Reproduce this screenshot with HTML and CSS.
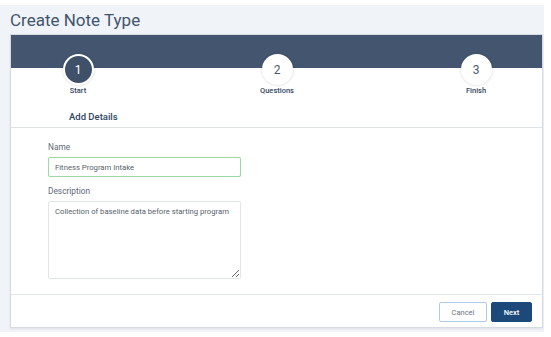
FILE: index.html
```html
<!DOCTYPE html>
<html>

<head>
    <title>Create Note Type</title>
    <link rel="stylesheet" href="styles.css">
</head>

<body>
    <div class="page">
        <h1 class="page-title">Create Note Type</h1>

        <div class="card">
            <!-- Wizard steps -->
            <div class="stepper">
                <div class="stepper-band"></div>
                <div class="steps">
                    <div class="step active">
                        <span class="step-circle">1</span>
                        <span class="step-label">Start</span>
                    </div>
                    <div class="step">
                        <span class="step-circle">2</span>
                        <span class="step-label">Questions</span>
                    </div>
                    <div class="step">
                        <span class="step-circle">3</span>
                        <span class="step-label">Finish</span>
                    </div>
                </div>
            </div>

            <div class="section-head">Add Details</div>

            <!-- Note type form -->
            <form class="note-form">
                <label for="note-name">Name</label>
                <input type="text" id="note-name" class="valid" value="Fitness Program Intake" />

                <label for="note-desc">Description</label>
                <textarea id="note-desc">Collection of baseline data before starting program</textarea>
            </form>

            <div class="card-footer">
                <button type="button" class="btn btn-outline">Cancel</button>
                <button type="button" class="btn btn-primary">Next</button>
            </div>
        </div>
    </div>
</body>

</html>
```

FILE: styles.css
```css
/* Page */
body {
    margin: 0;
    font-family: Roboto, "Noto Sans", sans-serif;
    background-color: #fff;
}
.page {
    margin-top: 5px;
    width: 534px;
    height: 327px;
    padding: 0 0 0 10px;
    background-color: #f0f3f7;
    overflow: hidden;
}
.page-title {
    margin: 5px 0 4px;
    font-size: 17px;
    line-height: 20px;
    font-weight: 400;
    color: #42546c;
}

/* Card */
.card {
    width: 531px;
    height: 292px;
    background-color: #fff;
    border: 1px solid #d6dbe2;
    box-shadow: 0 1px 2px rgba(0, 0, 0, 0.08);
}

/* Stepper */
.stepper-band {
    height: 33px;
    background-color: #44566f;
}
.steps {
    display: flex;
    justify-content: space-between;
    margin-top: -14px;
    padding: 0 48px 0 49px;
}
.step {
    width: 36px;
    display: flex;
    flex-direction: column;
    align-items: center;
}
.step-circle {
    box-sizing: border-box;
    width: 31px;
    height: 31px;
    border-radius: 50%;
    background-color: #fff;
    border: 2px solid #fff;
    box-shadow: 0 0 3px rgba(0, 0, 0, 0.18);
    display: flex;
    align-items: center;
    justify-content: center;
    font-size: 12px;
    color: #4a5a70;
}
.step.active .step-circle {
    background-color: #3f5169;
    color: #fff;
}
.step-label {
    margin-top: 1px;
    font-size: 7.5px;
    line-height: 10px;
    font-weight: 500;
    color: #33475f;
    white-space: nowrap;
}

/* Section heading */
.section-head {
    margin-top: 15px;
    padding: 0 0 4px 58px;
    font-size: 9.5px;
    line-height: 12px;
    font-weight: 500;
    color: #2f4562;
    border-bottom: 1px solid #dfe3e8;
}

/* Form */
.note-form {
    display: flex;
    flex-direction: column;
    align-items: flex-start;
    padding: 13px 0 15px 37px;
    border-bottom: 1px solid #e3e6ea;
}
.note-form label {
    font-size: 8.3px;
    line-height: 12px;
    color: #5d6877;
    margin-bottom: 4px;
}
.note-form input,
.note-form textarea {
    box-sizing: border-box;
    width: 193px;
    font-family: Roboto, "Noto Sans", sans-serif;
    font-size: 7.7px;
    color: #555f6c;
    border: 1px solid #e1e4e8;
    border-radius: 2px;
    padding: 0 6px;
    outline: none;
}
.note-form input {
    height: 20px;
    margin-bottom: 8px;
}
.note-form input.valid {
    border-color: #9fd7a9;
    box-shadow: 0 0 1px rgba(80, 180, 100, 0.3);
}
.note-form textarea {
    height: 78px;
    padding-top: 4px;
    resize: vertical;
    line-height: 11px;
}

/* Footer */
.card-footer {
    display: flex;
    justify-content: flex-end;
    gap: 4px;
    padding: 7px 10px 0 0;
}
.btn {
    box-sizing: border-box;
    height: 20px;
    border-radius: 2px;
    font-family: Roboto, "Noto Sans", sans-serif;
    font-size: 7.5px;
    padding: 0;
    cursor: pointer;
}
.btn-outline {
    width: 48px;
    background-color: #fff;
    border: 1px solid #aecbe8;
    color: #6a7582;
}
.btn-primary {
    width: 41px;
    background-color: #1c497a;
    border: 1px solid #1c497a;
    color: #fff;
    font-weight: 500;
}
```
